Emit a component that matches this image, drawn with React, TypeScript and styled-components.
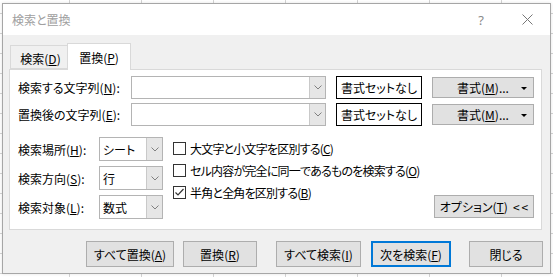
import React from 'react';
import styled, { createGlobalStyle } from 'styled-components';

const Global = createGlobalStyle`
  html, body { margin: 0; padding: 0; }
  body {
    width: 553px;
    height: 277px;
    overflow: hidden;
    background-color: #fff;
    background-image:
      linear-gradient(to right, #d4d4d4 1px, transparent 1px),
      linear-gradient(to bottom, #d4d4d4 1px, transparent 1px);
    background-size: 72px 20px;
    background-position: 69px 13px;
    font-family: "Noto Sans CJK JP", "Noto Sans", sans-serif;
    font-size: 12px;
    color: #000;
    font-feature-settings: "palt";
  }
`;

const Dialog = styled.div`
  box-sizing: border-box;
  width: 549px;
  height: 271px;
  margin: 3px 0 0 2px;
  border: 1px solid #a6a6a6;
  background: #f0f0f0;
  display: flex;
  flex-direction: column;
  box-shadow: 0 0 3px rgba(0, 0, 0, 0.12);
`;

const TitleBar = styled.div`
  height: 31px;
  background: #fff;
  display: flex;
  align-items: center;
  padding-left: 9px;
`;

const Title = styled.span`
  color: #a0a0a0;
  font-size: 12px;
  flex: 1;
`;

const TitleBtn = styled.div`
  width: 46px;
  height: 31px;
  display: flex;
  align-items: center;
  justify-content: center;
  color: #8a8a8a;
  font-size: 13px;
  font-family: "Segoe UI", "Noto Sans", sans-serif;
`;

const TabRow = styled.div`
  display: flex;
  align-items: flex-end;
  margin-top: 8px;
  padding-left: 7px;
  height: 26px;
  position: relative;
  z-index: 1;
`;

const Tab = styled.div<{ $active?: boolean }>`
  box-sizing: border-box;
  height: ${(p) => (p.$active ? 27 : 24)}px;
  width: ${(p) => (p.$active ? 64 : 58)}px;
  margin-left: ${(p) => (p.$active ? -1 : 0)}px;
  margin-bottom: ${(p) => (p.$active ? -1 : 0)}px;
  background: ${(p) => (p.$active ? '#fff' : '#f0f0f0')};
  border: 1px solid #d9d9d9;
  border-bottom: ${(p) => (p.$active ? 'none' : '1px solid #d9d9d9')};
  display: flex;
  align-items: center;
  justify-content: center;
  padding-top: ${(p) => (p.$active ? 0 : 2)}px;
  padding-left: ${(p) => (p.$active ? 0 : 3)}px;
`;

const Panel = styled.div`
  box-sizing: border-box;
  width: 533px;
  height: 161px;
  margin-left: 6px;
  background: #fff;
  border: 1px solid #d9d9d9;
  padding: 6px 7px 0 8px;
  display: flex;
  flex-direction: column;
`;

const Row = styled.div<{ $top?: number }>`
  display: flex;
  align-items: center;
  height: 23px;
  margin-top: ${(p) => p.$top ?? 0}px;
`;

const Label = styled.div<{ $w: number }>`
  width: ${(p) => p.$w}px;
  flex-shrink: 0;
  white-space: nowrap;
`;

const U = styled.span`
  text-decoration: underline;
  text-underline-offset: 1px;
`;

const Combo = styled.div<{ $w: number; $h: number }>`
  box-sizing: border-box;
  width: ${(p) => p.$w}px;
  height: ${(p) => p.$h}px;
  border: 1px solid #b4b4b4;
  background: #fff;
  display: flex;
  align-items: stretch;
`;

const ComboText = styled.div`
  flex: 1;
  display: flex;
  align-items: center;
  padding-left: 3px;
`;

const DropBtn = styled.div`
  width: 15px;
  background: #e6e6e6;
  border-left: 1px solid #c9c9c9;
  display: flex;
  align-items: center;
  justify-content: center;
`;

const FormatBox = styled.div`
  box-sizing: border-box;
  width: 86px;
  height: 23px;
  margin-left: 10px;
  border: 1px solid #000;
  display: flex;
  align-items: center;
  justify-content: center;
`;

const Button = styled.div<{ $w: number; $default?: boolean }>`
  box-sizing: border-box;
  width: ${(p) => p.$w}px;
  height: 100%;
  background: #e1e1e1;
  border: ${(p) => (p.$default ? '2px solid #0078d7' : '1px solid #adadad')};
  display: flex;
  align-items: center;
  justify-content: center;
  position: relative;
  white-space: nowrap;
`;

const FormatBtnWrap = styled.div`
  margin-left: 10px;
  height: 21px;
  display: flex;
`;

const Caret = styled.span`
  position: absolute;
  right: 6px;
  top: 9px;
  width: 0;
  height: 0;
  border-left: 3px solid transparent;
  border-right: 3px solid transparent;
  border-top: 3px solid #000;
`;

const Lower = styled.div`
  display: flex;
  margin-top: 11px;
  height: 82px;
`;

const SelectGrid = styled.div`
  display: grid;
  grid-template-columns: 81px 64px;
  grid-auto-rows: 24px;
  row-gap: 5px;
  align-items: center;
`;

const Checks = styled.div`
  margin-left: 10px;
  display: flex;
  flex-direction: column;
`;

const CheckRow = styled.div`
  height: 22px;
  display: flex;
  align-items: center;
  gap: 4px;
  white-space: nowrap;
`;

const CheckText = styled.span`
  letter-spacing: -0.8px;
`;

const Box = styled.div`
  box-sizing: border-box;
  width: 13px;
  height: 13px;
  border: 1px solid #333;
  background: #fff;
  display: flex;
  align-items: center;
  justify-content: center;
`;

const OptionWrap = styled.div`
  margin-left: auto;
  align-self: flex-end;
  height: 23px;
  margin-bottom: 1px;
  display: flex;
`;

const Arrows = styled.span`
  letter-spacing: 2px;
  margin-left: 5px;
  margin-right: -2px;
`;

const BottomBar = styled.div`
  display: flex;
  height: 26px;
  margin-top: 11px;
  padding-left: 83px;
`;

const BtnSlot = styled.div<{ $ml: number }>`
  margin-left: ${(p) => p.$ml}px;
  display: flex;
`;

const Chevron = () => (
  <svg width="8" height="5" viewBox="0 0 8 5">
    <polyline points="0.5,0.5 4,4 7.5,0.5" fill="none" stroke="#808080" strokeWidth="1" />
  </svg>
);

const Check = () => (
  <svg width="11" height="11" viewBox="0 0 11 11">
    <polyline points="1.5,5.5 4,8 9.5,2" fill="none" stroke="#333" strokeWidth="1.2" />
  </svg>
);

const CloseIcon = () => (
  <svg width="11" height="11" viewBox="0 0 11 11">
    <line x1="0.5" y1="0.5" x2="10.5" y2="10.5" stroke="#777" strokeWidth="1" />
    <line x1="10.5" y1="0.5" x2="0.5" y2="10.5" stroke="#777" strokeWidth="1" />
  </svg>
);

const checks: { text: string; key: string; checked: boolean }[] = [
  { text: '大文字と小文字を区別する', key: 'C', checked: false },
  { text: 'セル内容が完全に同一であるものを検索する', key: 'O', checked: false },
  { text: '半角と全角を区別する', key: 'B', checked: true },
];

const selects: { label: string; key: string; value: string }[] = [
  { label: '検索場所', key: 'H', value: 'シート' },
  { label: '検索方向', key: 'S', value: '行' },
  { label: '検索対象', key: 'L', value: '数式' },
];

const bottom: { text: string; key: string; w: number; ml: number; def?: boolean }[] = [
  { text: 'すべて置換', key: 'A', w: 88, ml: 0 },
  { text: '置換', key: 'R', w: 74, ml: 9 },
  { text: 'すべて検索', key: 'I', w: 85, ml: 19 },
  { text: '次を検索', key: 'F', w: 80, ml: 10, def: true },
  { text: '閉じる', key: '', w: 74, ml: 18 },
];

export default function App() {
  return (
    <>
      <Global />
      <Dialog>
        <TitleBar>
          <Title>検索と置換</Title>
          <TitleBtn>?</TitleBtn>
          <TitleBtn>
            <CloseIcon />
          </TitleBtn>
        </TitleBar>
        <TabRow>
          <Tab>
            検索(<U>D</U>)
          </Tab>
          <Tab $active>
            置換(<U>P</U>)
          </Tab>
        </TabRow>
        <Panel>
          <Row>
            <Label $w={113}>
              検索する文字列(<U>N</U>):
            </Label>
            <Combo $w={195} $h={23}>
              <ComboText />
              <DropBtn>
                <Chevron />
              </DropBtn>
            </Combo>
            <FormatBox>書式セットなし</FormatBox>
            <FormatBtnWrap>
              <Button $w={102}>
                書式(<U>M</U>)...
                <Caret />
              </Button>
            </FormatBtnWrap>
          </Row>
          <Row $top={4}>
            <Label $w={113}>
              置換後の文字列(<U>E</U>):
            </Label>
            <Combo $w={195} $h={23}>
              <ComboText />
              <DropBtn>
                <Chevron />
              </DropBtn>
            </Combo>
            <FormatBox>書式セットなし</FormatBox>
            <FormatBtnWrap>
              <Button $w={102}>
                書式(<U>M</U>)...
                <Caret />
              </Button>
            </FormatBtnWrap>
          </Row>
          <Lower>
            <SelectGrid>
              {selects.map((s) => (
                <React.Fragment key={s.key}>
                  <Label $w={81}>
                    {s.label}(<U>{s.key}</U>):
                  </Label>
                  <Combo $w={64} $h={24}>
                    <ComboText>{s.value}</ComboText>
                    <DropBtn>
                      <Chevron />
                    </DropBtn>
                  </Combo>
                </React.Fragment>
              ))}
            </SelectGrid>
            <Checks>
              {checks.map((c) => (
                <CheckRow key={c.key}>
                  <Box>{c.checked && <Check />}</Box>
                  <CheckText>
                    {c.text}(<U>{c.key}</U>)
                  </CheckText>
                </CheckRow>
              ))}
            </Checks>
            <OptionWrap>
              <Button $w={100}>
                オプション(<U>T</U>)<Arrows>&lt;&lt;</Arrows>
              </Button>
            </OptionWrap>
          </Lower>
        </Panel>
        <BottomBar>
          {bottom.map((b) => (
            <BtnSlot key={b.text} $ml={b.ml}>
              <Button $w={b.w} $default={b.def}>
                {b.text}
                {b.key && (
                  <>
                    (<U>{b.key}</U>)
                  </>
                )}
              </Button>
            </BtnSlot>
          ))}
        </BottomBar>
      </Dialog>
    </>
  );
}
